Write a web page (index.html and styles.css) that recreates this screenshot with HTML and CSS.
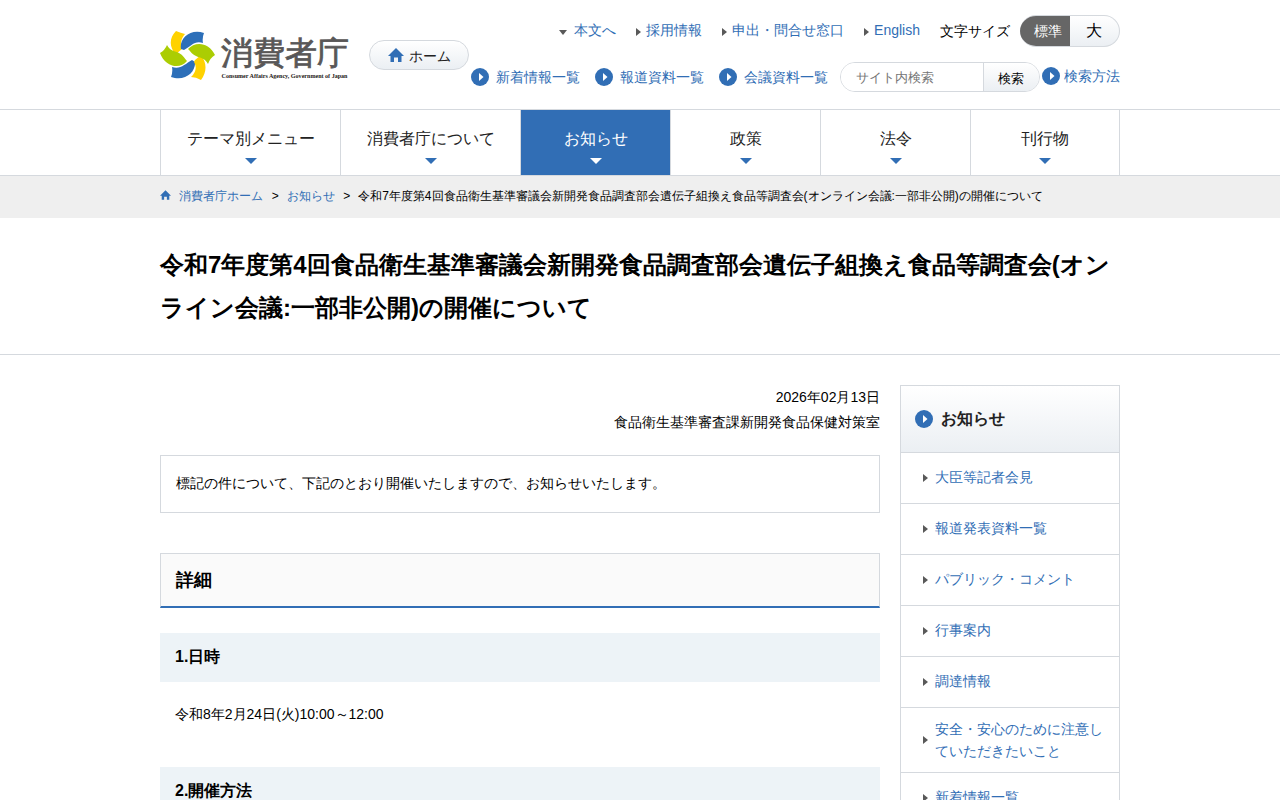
FILE: index.html
```
<!DOCTYPE html>
<html lang="ja">
<head>
  <meta charset="UTF-8">
  <meta name="viewport" content="width=device-width, initial-scale=1.0">
  <title>令和7年度第4回食品衛生基準審議会新開発食品調査部会遺伝子組換え食品等調査会(オンライン会議:一部非公開)の開催について | 消費者庁</title>
  <link rel="stylesheet" href="styles.css">
</head>
<body>
  <header class="header inner">
    <a href="#" class="logo">
      <svg class="logo-mark" viewBox="0 0 56 52" width="56" height="52">
        <path fill="#ffd200" d="M16 2Q21 4 25 5C21 10 20 14 22 20Q19 22 16 26C9 18 9 9 16 2Z"/>
        <path fill="#2c6fb9" d="M21 20C19 10 30 -1 44 4Q42 9 43 14C35 11 31 17 24 21Z"/>
        <path fill="#abcd03" d="M0 24Q5 21 7 16C10 22 15 22 19 24C23 26 25 30 27 32C20 41 5 38 0 24Z"/>
        <path fill="#2c6fb9" d="M12 38C20 41 25 35 32 31L35 33C36 43 25 53 11 48Q13 43 12 38Z"/>
        <path fill="#ffd200" d="M35 31L41 26C47 34 47 43 41 51Q36 48 31 48C36 43 37 38 34 33Z"/>
        <path fill="#abcd03" d="M28 20C35 12 49 13 55 26Q50 29 48 35C45 29 40 29 36 27C32 25 31 23 28 20Z"/>
      </svg>
      <span class="logo-text">
        <span class="logo-ja">消費者庁</span>
        <svg class="logo-en" viewBox="0 0 128 9" width="128" height="9"><text x="0.5" y="7" textLength="126" lengthAdjust="spacingAndGlyphs">Consumer Affairs Agency, Government of Japan</text></svg>
      </span>
    </a>
    <a href="#" class="home-button">
      <svg viewBox="0 0 16 14" width="16" height="14"><path d="M8 0L16 8H13.5V14H10V9.500H6V14H2.500V8H0Z"/></svg>
      <span>ホーム</span>
    </a>
    <div class="header-right">
      <div class="header-top">
        <ul class="sub-nav">
          <li class="down"><a href="#main">本文へ</a></li>
          <li><a href="#">採用情報</a></li>
          <li><a href="#">申出・問合せ窓口</a></li>
          <li><a href="#">English</a></li>
        </ul>
        <span class="size-label">文字サイズ</span>
        <div class="size-switch">
          <button type="button" class="active">標準</button>
          <button type="button" class="large">大</button>
        </div>
      </div>
      <div class="header-bottom">
        <ul class="list-nav">
          <li><a href="#" class="circle"><span>新着情報一覧</span></a></li>
          <li><a href="#" class="circle"><span>報道資料一覧</span></a></li>
          <li><a href="#" class="circle"><span>会議資料一覧</span></a></li>
        </ul>
        <form class="search">
          <input type="text" placeholder="サイト内検索">
          <button type="button">検索</button>
        </form>
        <a href="#" class="circle search-help"><span>検索方法</span></a>
      </div>
    </div>
  </header>

  <nav class="global-nav">
    <ul class="inner">
      <li class="wide"><a href="#">テーマ別メニュー</a></li>
      <li class="wide"><a href="#">消費者庁について</a></li>
      <li class="current"><a href="#">お知らせ</a></li>
      <li><a href="#">政策</a></li>
      <li><a href="#">法令</a></li>
      <li class="last"><a href="#">刊行物</a></li>
    </ul>
  </nav>

  <div class="breadcrumb">
    <ol class="inner">
      <li>
        <svg viewBox="0 0 16 14" width="11" height="10"><path d="M8 0L16 8H13.500V14H10V9.500H6V14H2.500V8H0Z"/></svg>
        <a href="#">消費者庁ホーム</a>
      </li>
      <li><a href="#">お知らせ</a></li>
      <li>令和7年度第4回食品衛生基準審議会新開発食品調査部会遺伝子組換え食品等調査会(オンライン会議:一部非公開)の開催について</li>
    </ol>
  </div>

  <div class="page-title">
    <h1 class="inner">令和7年度第4回食品衛生基準審議会新開発食品調査部会遺伝子組換え食品等調査会(オンライン会議:一部非公開)の開催について</h1>
  </div>

  <div class="content inner">
    <main id="main">
      <p class="date">2026年02月13日<br>食品衛生基準審査課新開発食品保健対策室</p>
      <p class="lead">標記の件について、下記のとおり開催いたしますので、お知らせいたします。</p>
      <h2>詳細</h2>
      <h3>1.日時</h3>
      <p class="text">令和8年2月24日(火)10:00～12:00</p>
      <h3>2.開催方法</h3>
    </main>
    <aside class="side">
      <p class="side-title"><a href="#" class="circle">お知らせ</a></p>
      <ul>
        <li><a href="#">大臣等記者会見</a></li>
        <li><a href="#">報道発表資料一覧</a></li>
        <li><a href="#">パブリック・コメント</a></li>
        <li><a href="#">行事案内</a></li>
        <li><a href="#">調達情報</a></li>
        <li><a href="#">安全・安心のために注意していただきたいこと</a></li>
        <li><a href="#">新着情報一覧</a></li>
      </ul>
    </aside>
  </div>
</body>
</html>
```
FILE: styles.css
```
* {
  box-sizing: border-box;
}

html, body {
  height: 800px;
  overflow: hidden;
}

body {
  margin: 0;
  font-family: "Liberation Sans", sans-serif;
  font-size: 14px;
  line-height: 1.8;
  color: #000;
  background-color: #fff;
}

ul, ol {
  margin: 0;
  padding: 0;
  list-style: none;
}

a {
  color: #316eb5;
  text-decoration: none;
}

button, input {
  font-family: inherit;
  margin: 0;
  padding: 0;
}

.inner {
  width: 960px;
  margin: 0 auto;
}

/* ヘッダー */
.header {
  display: flex;
  height: 109px;
}

.logo {
  display: flex;
  width: 209px;
  padding-top: 29px;
}

.logo-mark {
  flex: none;
}

.logo-text {
  padding: 4px 0 0 5px;
}

.logo-ja {
  display: block;
  height: 38px;
  font-size: 32px;
  line-height: 40px;
  color: #595757;
  -webkit-text-stroke: 0.8px #595757;
  white-space: nowrap;
}

.logo-en {
  display: block;
  overflow: visible;
  font-family: "Liberation Serif", serif;
  font-size: 6.5px;
  font-weight: bold;
  fill: #231815;
}

.home-button {
  display: flex;
  align-items: center;
  gap: 5px;
  width: 100px;
  height: 30px;
  margin-top: 40px;
  padding-left: 18px;
  border: 1px solid #d5d9de;
  border-radius: 15px;
  background: linear-gradient(#fff, #ebeff3);
  color: #222;
  white-space: nowrap;
}

.home-button span {
  padding-top: 3px;
}

.home-button svg, .breadcrumb svg {
  flex: none;
  fill: #316eb5;
}

.header-right {
  flex: 1;
  padding-top: 15px;
}

.header-top, .header-bottom {
  display: flex;
  justify-content: flex-end;
  align-items: center;
  white-space: nowrap;
}

.header-top {
  height: 32px;
  margin-bottom: 15px;
}

.sub-nav, .list-nav {
  display: flex;
}

.sub-nav li {
  display: flex;
  align-items: center;
  margin-left: 20px;
}

.sub-nav li::before, .side li a::before {
  content: "";
  flex: none;
  margin-right: 5px;
  border: 4px solid transparent;
  border-left: 5px solid #595959;
  border-right: 0;
}

.sub-nav li::before {
  margin-top: 2px;
}

.sub-nav li.down::before {
  margin-right: 7px;
  border: 4px solid transparent;
  border-top: 5px solid #595959;
  border-bottom: 0;
}

.size-label {
  margin: 0 10px 0 20px;
  padding-top: 1px;
}

.size-switch {
  display: flex;
  width: 100px;
  height: 32px;
  border: 1px solid #d5d9de;
  border-left: 0;
  border-radius: 16px;
  overflow: hidden;
  background: linear-gradient(#fff, #ebeff3);
}

.size-switch button {
  width: 50%;
  border: 0;
  background: none;
  font-size: 14px;
}

.size-switch .active {
  padding: 2px 0 0 6px;
  background-color: #666;
  color: #fff;
}

.size-switch .large {
  font-size: 16px;
}

.circle {
  display: flex;
  align-items: center;
}

.circle::before {
  content: "";
  flex: none;
  width: 18px;
  height: 18px;
  margin-right: 7px;
  border-radius: 50%;
  background: #316eb5 url("data:image/svg+xml,%3Csvg xmlns='http://www.w3.org/2000/svg' width='18' height='18'%3E%3Cpath d='M8 5L12.500 9L8 13Z' fill='%23fff'/%3E%3C/svg%3E");
}

.list-nav {
  gap: 15px;
}

.list-nav span {
  padding-top: 1px;
}

.search {
  display: flex;
  width: 200px;
  height: 30px;
  margin-left: 12px;
  border: 1px solid #d5d9de;
  border-radius: 15px;
  overflow: hidden;
}

.search input {
  width: 142px;
  padding-left: 15px;
  border: 0;
  font-size: 13.333px;
}

.search button {
  flex: 1;
  padding: 3px 2px 0 0;
  border: 0;
  border-left: 1px solid #d5d9de;
  background: linear-gradient(#fff, #ebeff3);
  font-size: 13.333px;
}

.search-help {
  margin: 0 0 2px 2px;
}

.search-help::before {
  margin-right: 4px;
}

.search-help span {
  padding-top: 2px;
}

/* グローバルナビ */
.global-nav {
  border-top: 1px solid #d5d9de;
  border-bottom: 1px solid #d5d9de;
}

.global-nav ul {
  display: flex;
  border-left: 1px solid #d5d9de;
}

.global-nav li {
  flex: 0 0 150px;
  height: 65px;
  border-right: 1px solid #d5d9de;
}

.global-nav .wide {
  flex: 0 0 180px;
}

.global-nav .last {
  flex: 1;
}

.global-nav a {
  display: flex;
  flex-direction: column;
  align-items: center;
  height: 100%;
  padding-top: 15px;
  font-size: 16px;
  color: #222;
}

.global-nav a::after {
  content: "";
  margin-top: 4px;
  border: 6px solid transparent;
  border-top-color: #316eb5;
  border-bottom: 0;
}

.global-nav .current a {
  background-color: #316eb5;
  color: #fff;
}

.global-nav .current a::after {
  border-top-color: #fff;
}

/* パンくず */
.breadcrumb {
  height: 42px;
  background-color: #efefef;
  font-size: 12px;
}

.breadcrumb ol {
  display: flex;
  padding-top: 10px;
  white-space: nowrap;
}

.breadcrumb li + li::before {
  content: ">";
  margin: 0 8px 0 8.4px;
}

.breadcrumb svg {
  margin-right: 5px;
}

/* タイトル */
.page-title {
  height: 137px;
  padding-top: 25px;
  border-bottom: 1px solid #d5d9de;
}

.page-title h1 {
  font-size: 24px;
}

/* 本文 */
.content {
  display: flex;
  gap: 20px;
  padding-top: 30px;
}

#main {
  width: 720px;
}

#main p {
  margin: 0 0 20px;
}

#main .date {
  text-align: right;
}

#main .lead {
  margin-bottom: 40px;
  padding: 15px;
  border: 1px solid #d5d9de;
  height: 58px;
}

#main .text {
  margin-bottom: 40px;
  padding: 0 15px;
}

h2 {
  height: 55px;
  margin: 0 0 25px;
  padding: 10px 15px;
  border: 1px solid #d5d9de;
  border-bottom: 2px solid #316eb5;
  background-color: #fafafa;
  font-size: 18px;
}

h3 {
  margin: 0 0 20px;
  padding: 10px 15px;
  background-color: #edf3f7;
  font-size: 16px;
}

/* サイドメニュー */
.side {
  width: 220px;
  border: 1px solid #d5d9de;
}

.side-title {
  margin: 0;
  background: linear-gradient(#fff, #ebeff3);
  font-size: 16px;
  font-weight: bold;
}

.side-title a {
  height: 66px;
  padding-left: 14px;
  color: #222;
}

.side-title a::before {
  margin-right: 8px;
}

.side li {
  min-height: 51px;
  border-top: 1px solid #d5d9de;
}

.side li a {
  display: flex;
  align-items: center;
  min-height: 48.4px;
  padding: 10px 14px 9.4px 22px;
  line-height: 1.6;
}

.side li a::before {
  margin-right: 7px;
}
```
